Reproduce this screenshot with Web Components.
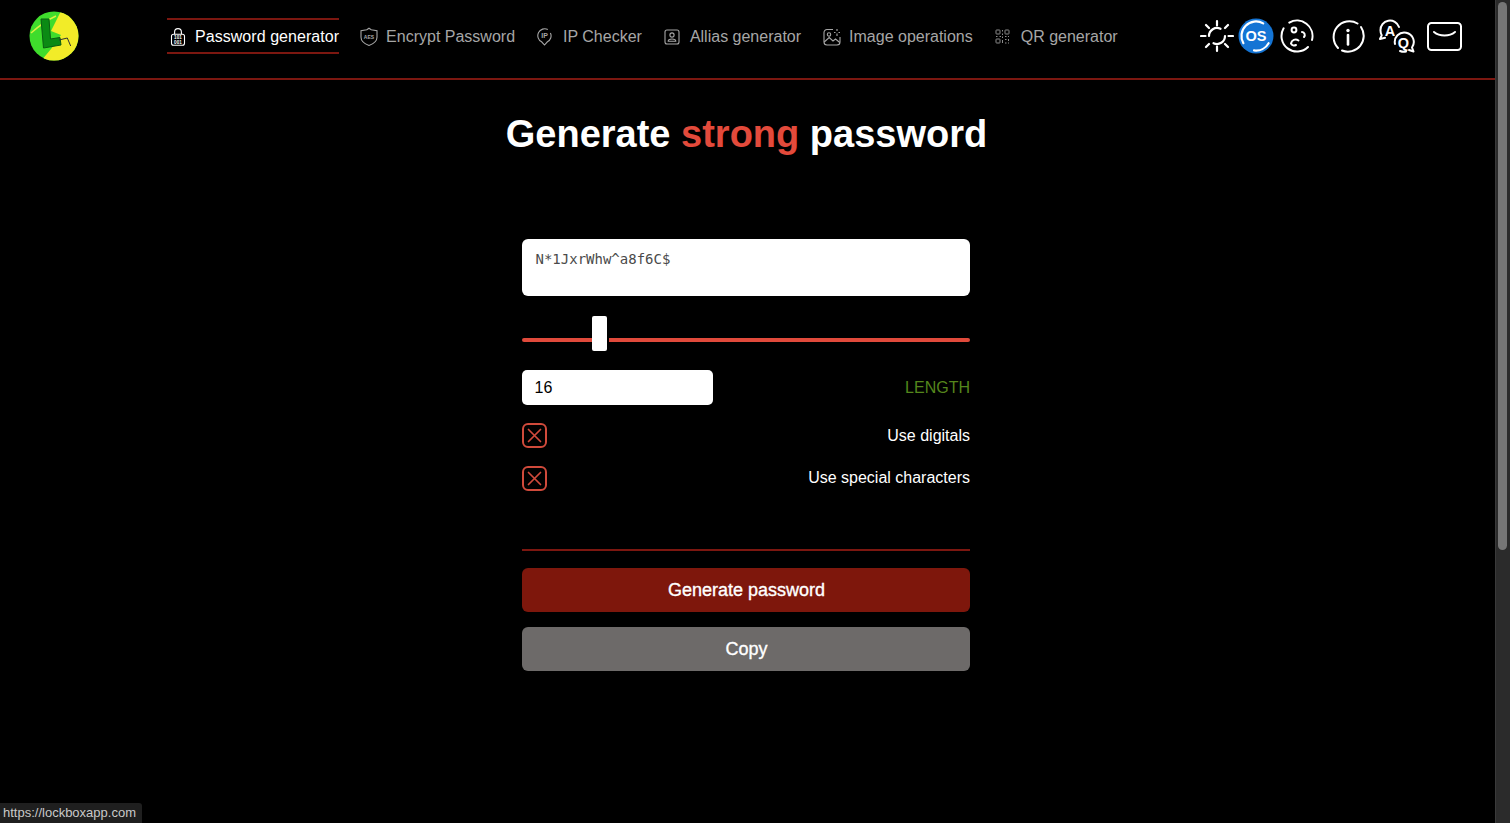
<!DOCTYPE html>
<html lang="en">
<head>
<meta charset="utf-8">
<title>Lockbox</title>
<style>
  html, body { margin: 0; height: 100%; background: #000; overflow: hidden; }
  body { font-family: "Liberation Sans", Arial, sans-serif; color: #fff; }
</style>
</head>
<body>
<app-shell>
  <site-header></site-header>
  <password-form></password-form>
</app-shell>
<status-link>https://lockboxapp.com</status-link>

<script>
// small helper, every element below just sets its shadow html
function shadow(el, html) {
  const root = el.attachShadow({ mode: "open" });
  root.innerHTML = html;
  return root;
}

const ICONS = {
  lock: `<svg width="16" height="18" viewBox="0 0 16 18" fill="none" stroke="currentColor" stroke-width="1.1"><path d="M4.6 6.200V4a3.400 3.400 0 0 1 6.800 0v2.200"/><rect x="1.500" y="6.200" width="13" height="11" rx="2"/><g fill="currentColor" stroke="none" font-size="4.600" font-weight="700" text-anchor="middle" font-family="Liberation Sans"><text x="8" y="11">101</text><text x="8" y="15.500">001</text></g></svg>`,
  shield: `<svg width="18" height="20" viewBox="0 0 18 20" fill="none" stroke="currentColor" stroke-width="1.1"><path d="M9 1.200l2.200 1.600 5.800 1v6.400c0 3.800-3.200 6.400-8 8.200-4.800-1.800-8-4.400-8-8.200V3.800l5.800-1z"/><text x="9" y="11.600" fill="currentColor" stroke="none" font-size="5" font-weight="700" text-anchor="middle" font-family="Liberation Sans">AES</text></svg>`,
  pin: `<svg width="15" height="18" viewBox="0 0 15 18" fill="none" stroke="currentColor" stroke-width="1.1"><path d="M10.800 1.500A6.600 6.600 0 0 0 4.600 13.800L7.500 17l2.900-3.200A6.600 6.600 0 0 0 13.400 5"/><text x="7.500" y="10.400" fill="currentColor" stroke="none" font-size="7" font-weight="700" text-anchor="middle" font-family="Liberation Sans">IP</text></svg>`,
  person: `<svg width="16" height="16" viewBox="0 0 16 16" fill="none" stroke="currentColor" stroke-width="1.1"><rect x="1" y="1" width="14" height="14" rx="2"/><circle cx="8" cy="6" r="2.100"/><path d="M4.200 12.300c0-1.700 1.700-2.300 3.800-2.300s3.800.6 3.800 2.300z"/></svg>`,
  image: `<svg width="18" height="18" viewBox="0 0 18 18" fill="none" stroke="currentColor" stroke-width="1.1"><path d="M10 1.500H4a3 3 0 0 0-3 3V14a3 3 0 0 0 3 3h10a3 3 0 0 0 3-3V9"/><circle cx="6" cy="6.500" r="1.700"/><path d="M1.200 14l5-4.500 3.800 3.500 2.500-2 4.300 3.500"/><path d="M14 1v2M14 5.500V8M11 4.500h1.500M15.500 4.500H17"/></svg>`,
  qr: `<svg width="15" height="15" viewBox="0 0 15 15" fill="none" stroke="currentColor" stroke-width="1" opacity=".85"><rect x="1" y="1" width="4" height="4" rx=".6"/><rect x="10" y="1" width="4" height="4" rx=".6"/><rect x="1" y="10" width="4" height="4" rx=".6"/><path d="M7.500 1v1.500M7.500 4.500V6M1 7.500h1.500M4.500 7.500H6M7.500 7.500V9M10 7.500h1.500M13 7.500h1M10 10.500h1.500M13.500 10v2M7.500 11v3M10 14h1.500M13 14h1"/></svg>`,
  sun: `<svg width="34" height="34" viewBox="0 0 34 34" fill="none" stroke="#fff" stroke-width="2.200" stroke-linecap="round"><path d="M9 17a8 8 0 0 1 11.500-7.200M25 17a8 8 0 0 1-11.500 7.200"/><path d="M17 2v4.500M17 27.500V32M1 17h4.500M28.500 17H33M6 6l3 3M25 25l3 3M6 28l3-3M25 9l3-3"/></svg>`,
  os: `<svg width="36" height="36" viewBox="0 0 36 36"><circle cx="18" cy="18" r="17.500" fill="#1474d4"/><path d="M5.400 25.200A14.500 14.500 0 0 1 25.200 5.400M30.600 25.200A14.500 14.500 0 0 1 16 32.400" fill="none" stroke="#fff" stroke-width="2.200" stroke-linecap="round"/><text x="18" y="23" fill="#fff" font-size="14.500" font-weight="700" text-anchor="middle" font-family="Liberation Sans">OS</text></svg>`,
  palette: `<svg width="34" height="34" viewBox="0 0 34 34" fill="none" stroke="#fff" stroke-width="2" stroke-linecap="round"><path d="M9.300 3.600A15.500 15.500 0 0 1 32 21M28 28A15.500 15.500 0 0 1 3.600 9.300"/><circle cx="14" cy="11" r="2.400"/><path d="M22 13a3 3 0 0 1 2 5M18.500 21.500c-3-2-7-.5-7.500 3 1 2 3 2.500 5 1.500"/></svg>`,
  info: `<svg width="34" height="34" viewBox="0 0 34 34" fill="none" stroke="#fff" stroke-width="2" stroke-linecap="round"><path d="M7 29A15.800 15.800 0 0 1 26.500 4.500M30 8A15.800 15.800 0 0 1 11 31.500"/><circle cx="17" cy="11.500" r="1.700" fill="#fff" stroke="none"/><path d="M17 16v9.500" stroke-width="2.600"/></svg>`,
  qa: `<svg width="37" height="34" viewBox="0 0 37 34" fill="none" stroke="#fff" stroke-width="2" stroke-linecap="round" stroke-linejoin="round"><path d="M21 8A9.500 9.500 0 0 0 2.500 11.500c0 2 .5 3.500 1.200 4.800L2 20l5-1.200"/><path d="M17 25A9.500 9.500 0 1 1 34 28.500l1.500 4-4.500-1.500"/><path d="M22 32c2 .8 4 1 6 .6"/><text x="12" y="16.500" fill="#fff" stroke="none" font-size="14.500" font-weight="700" text-anchor="middle" font-family="Liberation Sans">A</text><text x="25.500" y="28.500" fill="#fff" stroke="none" font-size="14.500" font-weight="700" text-anchor="middle" font-family="Liberation Sans">Q</text></svg>`,
  mail: `<svg width="35" height="29" viewBox="0 0 35 29" fill="none" stroke="#fff" stroke-width="2" stroke-linecap="round"><rect x="1" y="1" width="33" height="27" rx="3.500"/><path d="M7 10c3 2.500 7 3.500 10.500 3.500s7.500-1 10.500-3.500"/></svg>`,
  x: `<svg width="25" height="25" viewBox="0 0 25 25" fill="none" stroke="#d04a3b" stroke-width="2" stroke-linecap="round"><rect x="1" y="1" width="23" height="23" rx="5"/><path d="M6.500 6.500l12 12M18.500 6.500l-12 12" stroke-width="1.700"/></svg>`
};

class AppShell extends HTMLElement {
  constructor() {
    super();
    shadow(this, `
      <style>
        :host { display: block; margin-right: 15px; height: 823px; background: #000; }
      </style>
      <slot></slot>`);
  }
}

class SiteLogo extends HTMLElement {
  constructor() {
    super();
    shadow(this, `
      <style>:host { display: block; width: 50px; height: 50px; flex: none; }</style>
      <svg width="50" height="50" viewBox="0 0 50 50">
        <defs><clipPath id="c"><circle cx="25" cy="25" r="24.500"/></clipPath></defs>
        <g clip-path="url(#c)">
          <rect width="50" height="50" fill="#3fdc2c"/>
          <path d="M32 0L22 20 32 24 22 38 12 50H50V0z" fill="#f2ec28"/>
          <path d="M2 22C10 15 18 9 27 5" stroke="#d8f040" stroke-width="1.500" fill="none"/>
        </g>
        <path d="M12 8h8l1.500 20 9.500-1.500 1 7.500-17.500 3z" fill="#0b8a14" stroke="#0a5c12" stroke-width="1"/>
        <path d="M30 29l8.300-2 3.400 8" fill="none" stroke="#333" stroke-width="1"/>
      </svg>`);
  }
}

class NavItem extends HTMLElement {
  static get observedAttributes() { return ["icon"]; }
  constructor() {
    super();
    shadow(this, `
      <style>
        :host { display: flex; align-items: center; height: 31px; padding-top: 1px; gap: var(--icon-gap, 8px); color: #a6a6a6;
                font-size: 16px; border-top: 2px solid transparent; border-bottom: 2px solid transparent; white-space: nowrap; }
        :host([active]) { color: #fff; border-color: #7c1710; letter-spacing: .05px; margin-right: -1px; }
        .ic { display: flex; }
        :host([active]) .ic { padding-left: 3px; }
      </style>
      <span class="ic"></span><slot></slot>`);
  }
  attributeChangedCallback(name, old, val) {
    this.shadowRoot.querySelector(".ic").innerHTML = ICONS[val];
  }
}

class IconButton extends HTMLElement {
  static get observedAttributes() { return ["icon"]; }
  constructor() {
    super();
    shadow(this, `<style>:host { display: flex; align-items: center; flex: none; }</style><span style="display:flex"></span>`);
  }
  attributeChangedCallback(name, old, val) {
    this.shadowRoot.querySelector("span").innerHTML = ICONS[val];
  }
}

class SiteHeader extends HTMLElement {
  constructor() {
    super();
    shadow(this, `
      <style>
        :host { display: flex; align-items: center; box-sizing: border-box; height: 80px;
                padding: 0 33px 6px 29px; border-bottom: 2px solid #7c1710; }
        nav { display: flex; gap: 22px; margin-left: 88px; }
        .tools { display: flex; align-items: center; margin-left: auto; }
      </style>
      <site-logo></site-logo>
      <nav>
        <nav-item icon="lock" active style="--icon-gap:9px">Password generator</nav-item>
        <nav-item icon="shield">Encrypt Password</nav-item>
        <nav-item icon="pin" style="--icon-gap:11px">IP Checker</nav-item>
        <nav-item icon="person" style="--icon-gap:10px">Allias generator</nav-item>
        <nav-item icon="image">Image operations</nav-item>
        <nav-item icon="qr" style="--icon-gap:11px">QR generator</nav-item>
      </nav>
      <div class="tools">
        <icon-button icon="sun"></icon-button>
        <icon-button icon="os" style="margin-left:4px"></icon-button>
        <icon-button icon="palette" style="margin-left:6px"></icon-button>
        <icon-button icon="info" style="margin-left:17px"></icon-button>
        <icon-button icon="qa" style="margin-left:13px"></icon-button>
        <icon-button icon="mail" style="margin-left:12px"></icon-button>
      </div>`);
  }
}

class OptionRow extends HTMLElement {
  constructor() {
    super();
    shadow(this, `
      <style>
        :host { display: flex; justify-content: space-between; align-items: center; height: 25px; font-size: 16px; color: #fff; }
        span { display: flex; }
      </style>
      <span>${ICONS.x}</span><slot></slot>`);
  }
}

class ActionButton extends HTMLElement {
  constructor() {
    super();
    shadow(this, `
      <style>
        :host { display: flex; align-items: center; justify-content: center; height: 44px; padding-left: 1px; border-radius: 6px;
                background: var(--bg); color: #fff; font-size: 18px; -webkit-text-stroke: .35px #fff; }
      </style>
      <slot></slot>`);
  }
}

class PasswordForm extends HTMLElement {
  constructor() {
    super();
    shadow(this, `
      <style>
        :host { display: flex; flex-direction: column; align-items: center; padding-right: 2px; }
        h1 { margin: 0; padding-top: 31px; height: 127px; box-sizing: border-box; font-size: 38px; line-height: 46px;
             font-weight: 700; color: #fff; white-space: nowrap; }
        h1 em { font-style: normal; color: #e34a3b; }
        .form { display: flex; flex-direction: column; width: 448px; margin-left: -1px; padding-top: 32px; }
        .pass { box-sizing: border-box; height: 57px; padding: 11px 13.500px; background: #fff; border-radius: 6px;
                font: 14px/18px "DejaVu Sans Mono", "Liberation Mono", monospace; color: #4a4a4a; }
        input[type=range] { -webkit-appearance: none; appearance: none; display: block; width: 100%; height: 48px;
                margin: 20px 0 6px; background: transparent; }
        input[type=range]::-webkit-slider-runnable-track { height: 4px; background: #e04a3b; border-radius: 2px; }
        input[type=range]::-webkit-slider-thumb { -webkit-appearance: none; width: 15px; height: 35px; margin-top: -22px;
                background: #fff; border-radius: 2px; box-shadow: 2px 0 0 0 #000; }
        .len { display: flex; justify-content: space-between; align-items: center; height: 35px; }
        .num { box-sizing: border-box; width: 191px; height: 35px; padding: 0 12.500px; background: #fff; border-radius: 5px;
               color: #000; font-size: 16px; line-height: 35px; }
        .lbl { color: #55861c; font-size: 16px; }
        .opts { display: flex; flex-direction: column; gap: 17.500px; margin-top: 18px; }
        hr { width: 100%; box-sizing: border-box; height: 2px; margin: 58.500px 0 17px; border: 0; background: #7c1710; }
        .btns { display: flex; flex-direction: column; gap: 15px; }
      </style>
      <h1>Generate <em>strong</em> password</h1>
      <div class="form">
        <div class="pass">N*1JxrWhw^a8f6C$</div>
        <input type="range" min="4" max="78" value="16">
        <div class="len"><div class="num">16</div><div class="lbl">LENGTH</div></div>
        <div class="opts">
          <option-row>Use digitals</option-row>
          <option-row>Use special characters</option-row>
        </div>
        <hr>
        <div class="btns">
          <action-button style="--bg:#7e170c">Generate password</action-button>
          <action-button style="--bg:#6d6a69">Copy</action-button>
        </div>
      </div>`);
  }
}

class StatusLink extends HTMLElement {
  constructor() {
    super();
    shadow(this, `
      <style>
        :host { position: absolute; left: 0; bottom: 0; height: 20px; padding: 0 6px 0 3px; background: #1f1f1f;
                color: #c9c9c9; font: 13px/20px "Liberation Sans", Arial, sans-serif; border-top-right-radius: 3px; z-index: 2; }
      </style>
      <slot></slot>`);
  }
}

class PageScrollbar extends HTMLElement {
  constructor() {
    super();
    shadow(this, `
      <style>
        :host { position: fixed; top: 0; right: 0; width: 15px; height: 100%; box-sizing: border-box;
                background: #2b2b2b; border-left: 1px solid #3a3a3a; }
        div { margin: 2px 3px 0 2px; height: 548px; border-radius: 5px; background: #767676; }
      </style>
      <div></div>`);
  }
}

customElements.define("app-shell", AppShell);
customElements.define("site-logo", SiteLogo);
customElements.define("nav-item", NavItem);
customElements.define("icon-button", IconButton);
customElements.define("site-header", SiteHeader);
customElements.define("option-row", OptionRow);
customElements.define("action-button", ActionButton);
customElements.define("password-form", PasswordForm);
customElements.define("status-link", StatusLink);
customElements.define("page-scrollbar", PageScrollbar);
document.body.appendChild(document.createElement("page-scrollbar"));
</script>
</body>
</html>
